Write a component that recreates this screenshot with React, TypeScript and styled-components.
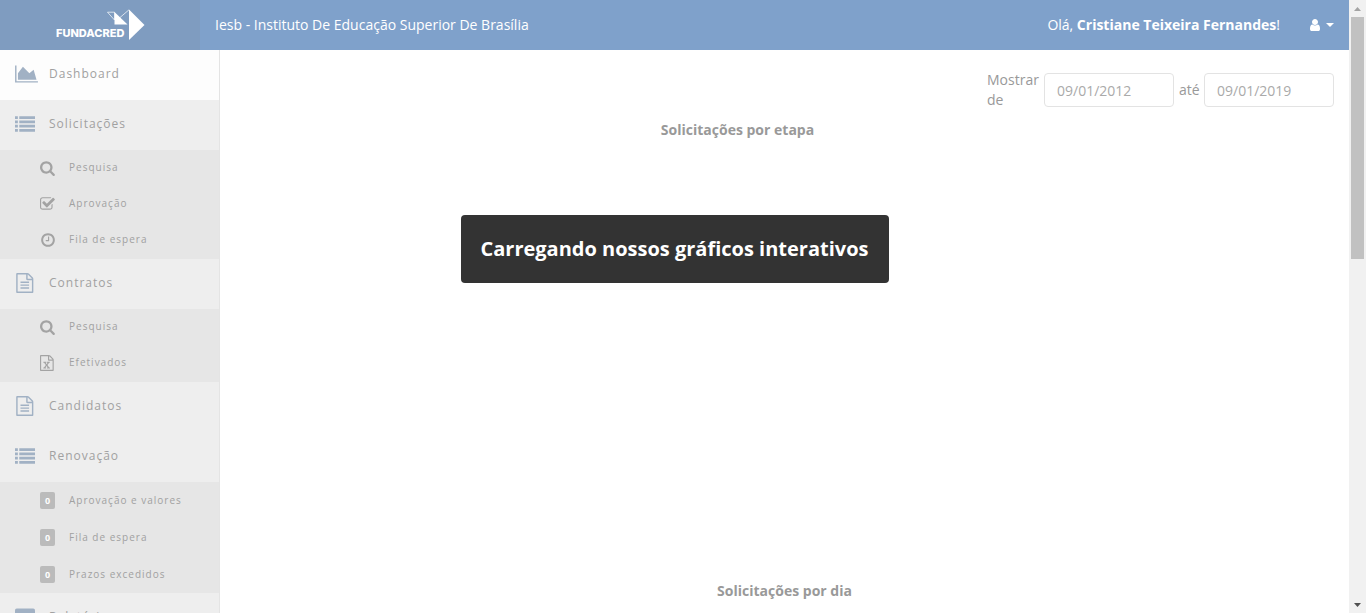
import React from "react";
import styled, { createGlobalStyle } from "styled-components";

const GlobalStyle = createGlobalStyle`
  *, *::before, *::after { box-sizing: border-box; }
  body {
    margin: 0;
    font-family: "Open Sans", "Noto Sans", sans-serif;
    font-size: 14px;
    line-height: 20px;
    color: #999;
    background: #fff;
  }
  ul { list-style: none; margin: 0; padding: 0; }
`;

const Shell = styled.div`
  display: flex;
  height: 100vh;
  overflow: hidden;
`;

const Page = styled.div`
  position: relative;
  flex: 1;
  min-width: 0;
  display: flex;
  flex-direction: column;
`;

const Header = styled.header`
  display: flex;
  align-items: stretch;
  flex: none;
  height: 50px;
  background: #7fa1cb;
  color: #fff;
`;

const Brand = styled.a`
  width: 200px;
  padding: 9px 0 0 56px;
  background: #7f9cc0;
`;

const Institution = styled.span`
  flex: 1;
  padding: 15px;
`;

const Greeting = styled.span`
  padding: 15px 0;
`;

const UserButton = styled.button`
  display: flex;
  align-items: center;
  gap: 5px;
  margin: 0 15px 0 29px;
  padding: 0;
  border: 0;
  background: none;
  color: #fff;
`;

const Caret = styled.span`
  border: 4px solid transparent;
  border-top-color: #fff;
  border-bottom: 0;
`;

const Body = styled.div`
  flex: 1;
  min-height: 0;
  display: flex;
`;

const Sidebar = styled.nav`
  flex: none;
  width: 220px;
  overflow: hidden;
  border-right: 1px solid #e4e4e4;
  background: #eee;
  letter-spacing: 1px;
`;

const MenuLink = styled.a<{ $active?: boolean }>`
  display: flex;
  align-items: center;
  height: 50px;
  padding: 0 0 2px 15px;
  background: ${(p) => (p.$active ? "#fdfdfd" : "transparent")};
  color: #a1a1a1;
  font-size: 12px;
  text-decoration: none;
`;

const MenuIcon = styled.span`
  display: flex;
  width: 34px;
  color: #a1b1c4;
`;

const MenuLabel = styled.span`
  padding-bottom: 1px;
`;

const Submenu = styled.ul<{ $counters?: boolean }>`
  padding-bottom: ${(p) => (p.$counters ? 0 : 1)}px;
  background: #e6e6e6;
`;

const SubLink = styled.a<{ $counter?: boolean }>`
  display: flex;
  align-items: center;
  height: ${(p) => (p.$counter ? 37 : 36)}px;
  padding: 0 0 1px 40px;
  color: #a1a1a1;
  font-size: 10px;
  text-decoration: none;
`;

const SubIcon = styled.span`
  display: flex;
  width: 29px;
  color: #a3a3a3;
`;

const SubLabel = styled.span`
  padding-bottom: 1px;
`;

const Counter = styled.span`
  width: 15px;
  border-radius: 2px;
  background: #bbb;
  color: #fff;
  font-size: 9px;
  font-weight: 700;
  line-height: 17px;
  letter-spacing: 0;
  text-align: center;
`;

const Main = styled.main`
  flex: 1;
  min-width: 0;
  overflow: hidden;
  padding: 20px 15px 0;
`;

const Filters = styled.form`
  display: flex;
  justify-content: flex-end;
  align-items: center;
  gap: 5px;
  height: 40px;
`;

const FilterLabel = styled.label<{ $width: number }>`
  width: ${(p) => p.$width}px;
`;

const DateInput = styled.input`
  width: 130px;
  height: 34px;
  padding: 0 12px;
  border: 1px solid #e3e3e3;
  border-radius: 4px;
  background: #fff;
  color: #aaa;
  font: inherit;
`;

const Chart = styled.section<{ $partial?: boolean }>`
  height: 461px;
  margin-right: ${(p) => (p.$partial ? 94 : 0)}px;
  padding-top: 10px;
`;

const ChartTitle = styled.h2`
  margin: 0;
  font-size: 14px;
  font-weight: 700;
  line-height: 20px;
  text-align: center;
`;

const Loading = styled.div`
  position: absolute;
  top: 215px;
  left: 50%;
  transform: translateX(-50%);
  padding: 19px 20px;
  border-radius: 4px;
  background: #333;
  color: #fff;
  font-size: 20px;
  font-weight: 700;
  line-height: 30px;
  white-space: nowrap;
`;

const Scrollbar = styled.div`
  flex: none;
  display: flex;
  flex-direction: column;
  align-items: center;
  width: 17px;
  background: #f1f1f1;
`;

const ScrollArrow = styled.span<{ $down?: boolean }>`
  display: flex;
  align-items: center;
  height: 17px;
  margin-top: ${(p) => (p.$down ? "auto" : 0)};
  color: ${(p) => (p.$down ? "#505050" : "#a3a3a3")};
`;

const ScrollThumb = styled.span`
  width: 13px;
  height: 42%;
  max-height: 242px;
  background: #c1c1c1;
`;

const FILE =
  "M1596 380q28 28 48 76t20 88v1152q0 40-28 68t-68 28h-1344q-40 0-68-28t-28-68v-1600q0-40 28-68t68-28h896q40 0 88 20t76 48zm-444-244v376h376q-10-29-22-41l-313-313q-12-12-41-22zm384 1528v-1024h-416q-40 0-68-28t-28-68v-416h-768v1536h1280z";

interface Glyph {
  left: number;
  width: number;
  path: string;
}

const ICONS = {
  area: {
    left: 0,
    width: 2048,
    path: "M2048 1536v128h-2048v-1536h128v1408h1920zm-384-1024l256 896h-1664v-576l448-576 576 576z",
  },
  list: {
    left: 0,
    width: 1792,
    path: "M0 192h256v256H0zM384 192h1408v256H384zM0 576h256v256H0zM384 576h1408v256H384zM0 960h256v256H0zM384 960h1408v256H384zM0 1344h256v256H0zM384 1344h1408v256H384z",
  },
  search: {
    left: 64,
    width: 1792,
    path: "M1216 832q0-185-131.500-316.500t-316.500-131.500-316.500 131.500-131.500 316.500 131.500 316.500 316.500 131.500 316.500-131.500 131.500-316.500zm512 832q0 52-38 90t-90 38q-54 0-90-38l-343-342q-179 124-399 124-143 0-273.500-55.500t-225-150-150-225-55.500-273.500 55.500-273.500 150-225 225-150 273.500-55.500 273.500 55.500 225 150 150 225 55.500 273.500q0 220-124 399l343 343q37 37 37 90z",
  },
  check: {
    left: 64,
    width: 1792,
    path: "M1472 930v318q0 119-84.500 203.500t-203.500 84.500h-832q-119 0-203.500-84.500t-84.500-203.500v-832q0-119 84.500-203.500t203.500-84.500h832q63 0 117 25 15 7 18 23 3 17-9 29l-49 49q-10 10-23 10-3 0-9-2-23-6-45-6h-832q-66 0-113 47t-47 113v832q0 66 47 113t113 47h832q66 0 113-47t47-113v-254q0-13 9-22l64-64q10-10 23-10 6 0 12 3 20 8 20 29zm231-489l-814 814q-24 24-57 24t-57-24l-430-430q-24-24-24-57t24-57l110-110q24-24 57-24t57 24l263 263 647-647q24-24 57-24t57 24l110 110q24 24 24 57t-24 57z",
  },
  clock: {
    left: 0,
    width: 1792,
    path: "M1024 544v448q0 14-9 23t-23 9h-320q-14 0-23-9t-9-23v-64q0-14 9-23t23-9h224v-352q0-14 9-23t23-9h64q14 0 23 9t9 23zm416 352q0-148-73-273t-198-198-273-73-273 73-198 198-73 273 73 273 198 198 273 73 273-73 198-198 73-273zm224 0q0 209-103 385.500t-279.500 279.500-385.500 103-385.500-103-279.500-279.500-103-385.500 103-385.500 279.500-279.500 385.500-103 385.500 103 279.500 279.500 103 385.500z",
  },
  file: {
    left: 20,
    width: 1792,
    path: FILE + "M512 768h768v128h-768zM512 1024h768v128h-768zM512 1280h768v128h-768z",
  },
  excel: {
    left: 128,
    width: 1792,
    path:
      FILE +
      "M500 768h330v106h-70l106 160 106-160h-70v-106h330v106h-80l-190 252 202 276h84v106h-330v-106h72l-126-180-130 180h74v106h-310v-106h78l204-270-196-258h-84z",
  },
  user: {
    left: 128,
    width: 1536,
    path: "M1536 1399q0 109-62.500 187t-150.500 78h-854q-88 0-150.500-78t-62.500-187q0-85 8.500-160.500t31.500-152 58.500-131 94-89 134.500-34.500q131 128 313 128t313-128q76 0 134.500 34.500t94 89 58.500 131 31.500 152 8.500 160.500zm-256-887q0 159-112.500 271.500t-271.500 112.500-271.500-112.500-112.500-271.500 112.500-271.500 271.500-112.500 271.500 112.500 112.500 271.500z",
  },
  card: {
    left: 0,
    width: 1792,
    path: "M160 128h1472q160 0 160 160v1216q0 160-160 160H160q-160 0-160-160V288q0-160 160-160z",
  },
} satisfies Record<string, Glyph>;

type IconName = keyof typeof ICONS;

function Icon({ name, size }: { name: IconName; size: number }) {
  const glyph = ICONS[name];
  return (
    <svg
      width={Math.round((size * glyph.width) / 1792)}
      height={size}
      viewBox={`${glyph.left} 0 ${glyph.width} 1792`}
      fill="currentColor"
      aria-hidden="true"
    >
      <path d={glyph.path} />
    </svg>
  );
}

function Logo() {
  return (
    <svg width="90" height="32" viewBox="0 0 90 32" role="img" aria-label="Fundacred">
      <path d="M73 0.500 88.500 16 73 31z" fill="#fff" />
      <path d="M58.500 3v12.500H71.500z" fill="#fff" />
      <path d="M51.500 3.200H58.500V11zM64 8.500 73 .8" fill="none" stroke="#fff" strokeWidth=".7" />
      <text x="0" y="28" fill="#fff" fontFamily="Inter, sans-serif" fontWeight="800" fontSize="11">
        FUNDACRED
      </text>
    </svg>
  );
}

interface SubEntry {
  label: string;
  icon?: IconName;
  count?: number;
}

interface Entry {
  label: string;
  icon: IconName;
  active?: boolean;
  items?: SubEntry[];
}

const MENU: Entry[] = [
  { label: "Dashboard", icon: "area", active: true },
  {
    label: "Solicitações",
    icon: "list",
    items: [
      { label: "Pesquisa", icon: "search" },
      { label: "Aprovação", icon: "check" },
      { label: "Fila de espera", icon: "clock" },
    ],
  },
  {
    label: "Contratos",
    icon: "file",
    items: [
      { label: "Pesquisa", icon: "search" },
      { label: "Efetivados", icon: "excel" },
    ],
  },
  { label: "Candidatos", icon: "file" },
  {
    label: "Renovação",
    icon: "list",
    items: [
      { label: "Aprovação e valores", count: 0 },
      { label: "Fila de espera", count: 0 },
      { label: "Prazos excedidos", count: 0 },
    ],
  },
  { label: "Relatórios", icon: "card" },
];

export default function App() {
  return (
    <Shell>
      <GlobalStyle />
      <Page>
        <Header>
          <Brand href="#">
            <Logo />
          </Brand>
          <Institution>Iesb - Instituto De Educação Superior De Brasília</Institution>
          <Greeting>
            Olá, <strong>Cristiane Teixeira Fernandes</strong>!
          </Greeting>
          <UserButton type="button" aria-label="Menu do usuário">
            <Icon name="user" size={14} />
            <Caret />
          </UserButton>
        </Header>
        <Body>
          <Sidebar>
            <ul>
              {MENU.map((entry) => (
                <li key={entry.label}>
                  <MenuLink href="#" $active={entry.active}>
                    <MenuIcon>
                      <Icon name={entry.icon} size={20} />
                    </MenuIcon>
                    <MenuLabel>{entry.label}</MenuLabel>
                  </MenuLink>
                  {entry.items && (
                    <Submenu $counters={entry.items[0].count !== undefined}>
                      {entry.items.map((item) => (
                        <li key={item.label}>
                          <SubLink href="#" $counter={item.count !== undefined}>
                            <SubIcon>
                              {item.icon ? <Icon name={item.icon} size={16} /> : <Counter>{item.count}</Counter>}
                            </SubIcon>
                            <SubLabel>{item.label}</SubLabel>
                          </SubLink>
                        </li>
                      ))}
                    </Submenu>
                  )}
                </li>
              ))}
            </ul>
          </Sidebar>
          <Main>
            <Filters>
              <FilterLabel htmlFor="from" $width={52}>
                Mostrar de
              </FilterLabel>
              <DateInput id="from" type="text" defaultValue="09/01/2012" />
              <FilterLabel htmlFor="to" $width={20}>
                até
              </FilterLabel>
              <DateInput id="to" type="text" defaultValue="09/01/2019" />
            </Filters>
            <Chart $partial>
              <ChartTitle>Solicitações por etapa</ChartTitle>
            </Chart>
            <Chart>
              <ChartTitle>Solicitações por dia</ChartTitle>
            </Chart>
          </Main>
        </Body>
        <Loading role="status">Carregando nossos gráficos interativos</Loading>
      </Page>
      <Scrollbar aria-hidden="true">
        <ScrollArrow>
          <svg width="7" height="4" viewBox="0 0 7 4" fill="currentColor">
            <path d="M0 4 3.500 0 7 4z" />
          </svg>
        </ScrollArrow>
        <ScrollThumb />
        <ScrollArrow $down>
          <svg width="7" height="4" viewBox="0 0 7 4" fill="currentColor">
            <path d="M0 0 3.500 4 7 0z" />
          </svg>
        </ScrollArrow>
      </Scrollbar>
    </Shell>
  );
}
